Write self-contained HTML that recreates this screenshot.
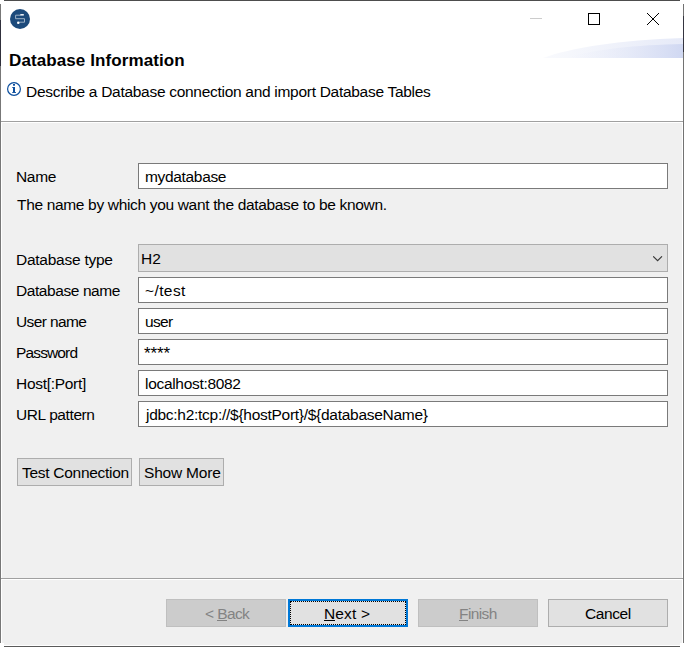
<!DOCTYPE html>
<html><head><meta charset="utf-8">
<style>
*{margin:0;padding:0;box-sizing:border-box}
html,body{width:684px;height:647px;overflow:hidden;background:#f0f0f0;font-family:"Liberation Sans",sans-serif;font-size:15.5px;color:#000}
.abs{position:absolute}
#hdr{position:absolute;left:0;top:0;width:684px;height:121px;background:#fff}
#sep1{position:absolute;left:0;top:121px;width:684px;height:1px;background:#a0a0a0}
.t{position:absolute;white-space:nowrap;line-height:18px}
.lbl{position:absolute;left:17px;white-space:nowrap;line-height:18px}
.inp{position:absolute;left:138px;width:530px;height:26px;background:#fff;border:1px solid #7a7a7a}
.inp span{position:absolute;left:7px;top:4px;line-height:18px;white-space:nowrap}
.btn{position:absolute;height:28px;background:#e1e1e1;border:1px solid #adadad;white-space:nowrap}
.btn span{position:absolute;line-height:18px;top:5px}
.dis{background:#cccccc;border-color:#bfbfbf;color:#838383}
u{text-decoration:none;position:relative}
u:after{content:"";position:absolute;left:0;right:0;bottom:1px;height:1px;background:currentColor}
</style></head><body>
<div id="hdr"></div>
<div id="sep1"></div>

<!-- window border -->
<div class="abs" style="left:1px;top:122px;width:682px;height:1px;background:#fff"></div>
<div class="abs" style="left:1px;top:122px;width:1px;height:524px;background:#fff"></div>
<div class="abs" style="left:682px;top:122px;width:1px;height:524px;background:#fff"></div>
<div class="abs" style="left:1px;top:645px;width:682px;height:1px;background:#fff"></div>
<div class="abs" style="left:4px;top:0;width:676px;height:1px;background:#4d4d4d"></div>
<div class="abs" style="left:0;top:4px;width:1px;height:639px;background:#777"></div>
<div class="abs" style="left:0;top:20px;width:1px;height:46px;background:#30303c"></div>
<div class="abs" style="left:683px;top:4px;width:1px;height:639px;background:#727272"></div>
<div class="abs" style="left:683px;top:16px;width:1px;height:36px;background:#353540"></div>
<div class="abs" style="left:4px;top:646px;width:676px;height:1px;background:#5a5a5a"></div>
<div class="abs" style="left:0;top:643px;width:4px;height:4px;background:#fff"></div>
<div class="abs" style="left:680px;top:643px;width:4px;height:4px;background:#fff"></div>

<!-- app icon -->
<svg class="abs" style="left:0;top:0" width="40" height="40" viewBox="0 0 40 40">
<circle cx="20" cy="19" r="10" fill="#1c4a7b"/>
<path d="M20.5 15.2H15.6V18.7H24.5V22.2H19.5" fill="none" stroke="#9db0c6" stroke-width="1"/>
<rect x="20.3" y="14" width="3.5" height="1.6" fill="#e8eef5"/>
<circle cx="18.3" cy="22.8" r="1.3" fill="#fff"/>
</svg>

<!-- window controls -->
<div class="abs" style="left:530px;top:18px;width:12px;height:1px;background:#ccc"></div>
<div class="abs" style="left:588px;top:13px;width:12px;height:12px;border:1px solid #000"></div>
<svg class="abs" style="left:647px;top:13px" width="12" height="12" viewBox="0 0 12 12" fill="#000"><rect x="0" y="0" width="1" height="1"/><rect x="11" y="0" width="1" height="1"/><rect x="1" y="1" width="1" height="1"/><rect x="10" y="1" width="1" height="1"/><rect x="2" y="2" width="1" height="1"/><rect x="9" y="2" width="1" height="1"/><rect x="3" y="3" width="1" height="1"/><rect x="8" y="3" width="1" height="1"/><rect x="4" y="4" width="1" height="1"/><rect x="7" y="4" width="1" height="1"/><rect x="5" y="5" width="1" height="1"/><rect x="6" y="5" width="1" height="1"/><rect x="6" y="6" width="1" height="1"/><rect x="5" y="6" width="1" height="1"/><rect x="7" y="7" width="1" height="1"/><rect x="4" y="7" width="1" height="1"/><rect x="8" y="8" width="1" height="1"/><rect x="3" y="8" width="1" height="1"/><rect x="9" y="9" width="1" height="1"/><rect x="2" y="9" width="1" height="1"/><rect x="10" y="10" width="1" height="1"/><rect x="1" y="10" width="1" height="1"/><rect x="11" y="11" width="1" height="1"/><rect x="0" y="11" width="1" height="1"/></svg>

<!-- swoosh -->
<svg class="abs" style="left:540px;top:36px" width="144" height="24" viewBox="0 0 144 24">
<defs><linearGradient id="g1" x1="0" x2="1" y1="0" y2="0">
<stop offset="0" stop-color="#f0f2fb" stop-opacity="0"/><stop offset="1" stop-color="#d0d8f2"/></linearGradient>
<linearGradient id="g2" x1="0" x2="1" y1="0" y2="0">
<stop offset="0" stop-color="#f9fafd"/><stop offset="1" stop-color="#e6eaf8"/></linearGradient></defs>
<path d="M3 22C30 12 80 4 143 2V22Z" fill="url(#g2)"/>
<path d="M25 22C55 13 95 9 143 8V22Z" fill="url(#g1)"/>
</svg>

<div class="t" style="left:9px;top:51px;font-weight:bold;font-size:17px;line-height:20px;letter-spacing:0.1px">Database Information</div>
<svg class="abs" style="left:0;top:75px" width="26" height="26" viewBox="0 75 26 26">
<circle cx="14" cy="89" r="6.4" fill="none" stroke="#0d4f9e" stroke-width="1.2"/>
<rect x="13" y="84" width="2" height="1.7" fill="#0d4f9e"/>
<rect x="13" y="87" width="2" height="5.5" fill="#0d4f9e"/>
<rect x="12.2" y="87" width="1" height="0.9" fill="#0d4f9e"/>
<rect x="12.2" y="92" width="3.8" height="0.9" fill="#0d4f9e"/>
</svg>
<div class="t" id="desc" style="left:26px;top:83px;letter-spacing:-0.29px">Describe a Database connection and import Database Tables</div>

<div class="lbl" id="l_name" style="left:16px;top:168px;letter-spacing:-0.33px">Name</div>
<div class="inp" style="top:163px"><span style="left:6px;letter-spacing:-0.33px">mydatabase</span></div>
<div class="lbl" id="l_hint" style="left:17px;top:196px;letter-spacing:-0.33px">The name by which you want the database to be known.</div>

<div class="lbl" id="l_type" style="left:16px;top:251px;letter-spacing:-0.25px">Database type</div>
<div class="inp" style="top:244px;height:28px;background:#e1e1e1;border-color:#adadad"><span style="left:2px;top:5px">H2</span>
<svg class="abs" style="left:514px;top:11px" width="11" height="7" viewBox="0 0 11 7"><path d="M0.2 0.3L4.6 4.7L9 0.3" fill="none" stroke="#3a3a3a" stroke-width="1.1"/></svg></div>
<div class="lbl" id="l_dbname" style="left:16px;top:282px;letter-spacing:-0.42px">Database name</div>
<div class="inp" style="top:277px"><span style="left:6px;letter-spacing:0.4px">~/test</span></div>
<div class="lbl" id="l_user" style="left:16px;top:313px;letter-spacing:-0.62px">User name</div>
<div class="inp" style="top:308px"><span style="left:6px;letter-spacing:-0.67px">user</span></div>
<div class="lbl" id="l_pass" style="left:16px;top:344px;letter-spacing:-0.86px">Password</div>
<div class="inp" style="top:339px"><span style="left:5px;top:5px;font-size:17px;letter-spacing:-0.1px">****</span></div>
<div class="lbl" id="l_host" style="left:16px;top:375px;letter-spacing:-0.3px">Host[:Port]</div>
<div class="inp" style="top:370px"><span style="left:6px;letter-spacing:-0.31px">localhost:8082</span></div>
<div class="lbl" id="l_url" style="left:16px;top:406px;letter-spacing:-0.4px">URL pattern</div>
<div class="inp" style="top:401px"><span style="left:7px;letter-spacing:-0.275px">jdbc:h2:tcp://${hostPort}/${databaseName}</span></div>

<div class="btn" style="left:17px;top:458px;width:115px"><span style="left:4px;letter-spacing:-0.28px">Test Connection</span></div>
<div class="btn" style="left:139px;top:458px;width:85px"><span style="left:4px;letter-spacing:-0.2px">Show More</span></div>

<div class="abs" style="left:1px;top:578px;width:682px;height:1px;background:#a0a0a0"></div>
<div class="abs" style="left:1px;top:579px;width:682px;height:1px;background:#fff"></div>

<div class="btn dis" style="left:166px;top:599px;width:120px"><span style="left:38px;letter-spacing:-0.6px">&lt; <u>B</u>ack</span></div>
<div class="btn" style="left:288px;top:599px;width:120px;border:2px solid #0078d7"><div class="abs" style="left:0;top:0;right:0;bottom:0;border:1px dotted #000"></div><span style="left:34px;top:4px;letter-spacing:0.15px"><u>N</u>ext &gt;</span></div>
<div class="btn dis" style="left:418px;top:599px;width:120px"><span style="left:40px;letter-spacing:-0.6px"><u>F</u>inish</span></div>
<div class="btn" style="left:548px;top:599px;width:120px"><span style="left:36px;letter-spacing:-0.4px">Cancel</span></div>
</body></html>
